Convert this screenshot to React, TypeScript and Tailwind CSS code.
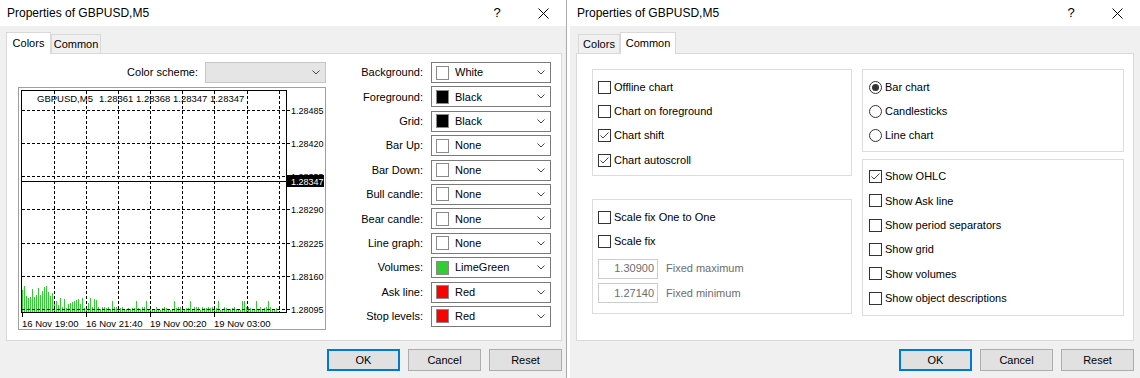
import React from "react";

const colorRows: [string, string, string][] = [
  ["Background:", "#ffffff", "White"],
  ["Foreground:", "#000000", "Black"],
  ["Grid:", "#000000", "Black"],
  ["Bar Up:", "#ffffff", "None"],
  ["Bar Down:", "#ffffff", "None"],
  ["Bull candle:", "#ffffff", "None"],
  ["Bear candle:", "#ffffff", "None"],
  ["Line graph:", "#ffffff", "None"],
  ["Volumes:", "#32cd32", "LimeGreen"],
  ["Ask line:", "#ff0000", "Red"],
  ["Stop levels:", "#ff0000", "Red"],
];

function volumes() {
  let s = 11;
  const rnd = () => {
    s = (s * 9301 + 49297) % 233280;
    return s / 233280;
  };
  const out: number[] = [];
  for (let i = 0; i < 128; i++) {
    const r = rnd();
    let h: number;
    if (i < 16) h = 12 + r * 15;
    else if (i < 38) h = 4 + r * 12;
    else h = 2 + r * 4 + (r > 0.86 ? 5 : 0);
    out.push(Math.round(h));
  }
  return out;
}

function Chevron() {
  return (
    <svg width="8" height="5" viewBox="0 0 8 5" className="block">
      <polyline points="0.5,0.5 4,4 7.5,0.5" fill="none" stroke="#444" strokeWidth="1" />
    </svg>
  );
}

function TitleBar({ title }: { title: string }) {
  return (
    <div className="flex h-[26px] items-center bg-white">
      <span className="pl-[7px] text-[12px] text-black">{title}</span>
      <div className="ml-auto flex h-full">
        <div className="flex w-[46px] items-center justify-center text-[13px]">?</div>
        <div className="flex w-[46px] items-center justify-center">
          <svg width="11" height="11" viewBox="0 0 11 11">
            <path d="M0.5 0.5 L10.5 10.5 M10.5 0.5 L0.5 10.5" stroke="#000" strokeWidth="1" />
          </svg>
        </div>
      </div>
    </div>
  );
}

function Tab({ label, active, w }: { label: string; active?: boolean; w: string }) {
  if (active) {
    return (
      <div
        className={`relative z-10 mb-[-1px] flex h-[22px] items-center justify-center border border-b-0 border-[#d9d9d9] bg-white ${w}`}
      >
        {label}
      </div>
    );
  }
  return (
    <div className={`flex h-[19px] items-center justify-center border border-b-0 border-[#d9d9d9] bg-[#f0f0f0] ${w}`}>
      {label}
    </div>
  );
}

function Buttons() {
  return (
    <div className="mt-[8px] flex justify-end gap-[8px]">
      <div className="flex h-[22px] w-[73px] items-center justify-center border-2 border-[#0078d7] bg-[#e1e1e1]">OK</div>
      <div className="flex h-[22px] w-[73px] items-center justify-center border border-[#adadad] bg-[#e1e1e1]">Cancel</div>
      <div className="flex h-[22px] w-[73px] items-center justify-center border border-[#adadad] bg-[#e1e1e1]">Reset</div>
    </div>
  );
}

function ColorSelect({ label, color, name }: { label: string; color: string; name: string }) {
  return (
    <div className="flex h-[21px] items-center justify-end">
      <span>{label}</span>
      <div className="ml-[8px] flex h-[21px] w-[120px] items-center border border-[#7a7a7a] bg-white pr-[5px]">
        <span className="ml-[4px] h-[14px] w-[13px] border border-[#8a8a8a]" style={{ backgroundColor: color }} />
        <span className="ml-[6px] flex-1">{name}</span>
        <Chevron />
      </div>
    </div>
  );
}

function Chart() {
  const vx = [35, 67, 99, 131, 163, 195, 228, 260];
  const hy = [22, 55, 88, 121, 155, 188, 221];
  const prices = ["1.28485", "1.28420", "1.28355", "1.28290", "1.28225", "1.28160", "1.28095"];
  const times: [string, number][] = [
    ["16 Nov 19:00", 3],
    ["16 Nov 21:40", 67],
    ["19 Nov 00:20", 131],
    ["19 Nov 03:00", 195],
  ];
  const bars = volumes();
  return (
    <svg width="306" height="241" className="block" fontFamily="'Liberation Sans', Arial, sans-serif" fontSize="9.5">
      {bars.map((h, i) => (
        <line key={i} x1={3.5 + i * 2} x2={3.5 + i * 2} y1={224} y2={224 - h} stroke="#32cd32" />
      ))}
      {vx.map((x) => (
        <line key={x} x1={x + 0.5} x2={x + 0.5} y1={3} y2={224} stroke="#000" strokeDasharray="3 2" />
      ))}
      {hy.map((y) => (
        <line key={y} x1={3} x2={268} y1={y + 0.5} y2={y + 0.5} stroke="#000" strokeDasharray="3 2" />
      ))}
      <line x1={3} x2={268} y1={93.5} y2={93.5} stroke="#000" />
      <rect x={2.5} y={2.5} width={265} height={222} fill="none" stroke="#000" />
      {hy.map((y, i) => (
        <g key={y}>
          <line x1={268} x2={271} y1={y + 0.5} y2={y + 0.5} stroke="#000" />
          <text x={272} y={y + 4} fontSize="9">
            {prices[i]}
          </text>
        </g>
      ))}
      <rect x={268} y={87} width={37} height={12} fill="#000" />
      <text x={272} y={97} fill="#fff" fontSize="9">
        1.28347
      </text>
      {times.map(([t, x]) => (
        <g key={t}>
          <line x1={x + 0.5} x2={x + 0.5} y1={224} y2={229} stroke="#000" />
          <text x={x} y={239}>
            {t}
          </text>
        </g>
      ))}
      <text x={18} y={14}>
        GBPUSD,M5
      </text>
      <text x={80} y={14}>
        1.28361 1.28368 1.28347 1.28347
      </text>
    </svg>
  );
}

function ColorsDialog() {
  return (
    <div className="flex h-[378px] w-[567px] flex-col border-r border-[#aaaaaa] bg-[#f0f0f0]">
      <TitleBar title="Properties of GBPUSD,M5" />
      <div className="pl-[6px] pr-[4px] pt-[6px]">
        <div className="flex h-[21px] items-end">
          <Tab label="Colors" active w="w-[45px]" />
          <Tab label="Common" w="w-[50px]" />
        </div>
        <div className="flex h-[288px] border border-[#d9d9d9] bg-white">
          <div className="ml-[11px] w-[308px] pt-[8px]">
            <div className="flex h-[21px] items-center justify-end">
              <span>Color scheme:</span>
              <div className="ml-[7px] flex h-[21px] w-[121px] items-center justify-end border border-[#c6c6c6] bg-[#e5e5e5] pr-[5px]">
                <Chevron />
              </div>
            </div>
            <div className="mt-[4px] h-[243px] w-[308px] border border-[#a0a0a0]">
              <Chart />
            </div>
          </div>
          <div className="flex flex-1 flex-col gap-[3.4px] pr-[10px] pt-[8px]">
            {colorRows.map(([l, c, n]) => (
              <ColorSelect key={l} label={l} color={c} name={n} />
            ))}
          </div>
        </div>
        <Buttons />
      </div>
    </div>
  );
}

function CheckBox({ label, checked }: { label: string; checked?: boolean }) {
  return (
    <div className="flex h-[24.3px] items-center">
      <span className="flex h-[13px] w-[13px] items-center justify-center border border-[#333] bg-white">
        {checked && (
          <svg width="11" height="11" viewBox="0 0 11 11">
            <polyline points="1.5,5.5 4,8 9.5,2.5" fill="none" stroke="#444" strokeWidth="1" />
          </svg>
        )}
      </span>
      <span className="ml-[3px]">{label}</span>
    </div>
  );
}

function Radio({ label, checked }: { label: string; checked?: boolean }) {
  return (
    <div className="flex h-[24.3px] items-center">
      <span className="flex h-[13px] w-[13px] items-center justify-center rounded-full border border-[#333] bg-white">
        {checked && <span className="h-[7px] w-[7px] rounded-full bg-[#333]" />}
      </span>
      <span className="ml-[3px]">{label}</span>
    </div>
  );
}

function FixedInput({ value, label }: { value: string; label: string }) {
  return (
    <div className="flex h-[24.3px] items-center">
      <div className="flex h-[20px] w-[60px] items-center justify-end border border-[#cccccc] bg-white pr-[3px] text-[#6d6d6d]">
        {value}
      </div>
      <span className="ml-[8px] text-[#6d6d6d]">{label}</span>
    </div>
  );
}

function CommonDialog() {
  return (
    <div className="flex h-[378px] w-[570px] flex-col bg-[#f0f0f0]">
      <TitleBar title="Properties of GBPUSD,M5" />
      <div className="pl-[6px] pr-[6px] pt-[6px]">
        <div className="flex h-[21px] items-end">
          <div className="ml-[2px]" />
          <Tab label="Colors" w="w-[42px]" />
          <Tab label="Common" active w="w-[56px]" />
        </div>
        <div className="flex h-[288px] gap-[10px] border border-[#d9d9d9] bg-white pl-[15px] pt-[15px]">
          <div className="flex w-[260px] flex-col">
            <div className="h-[107px] border border-[#dcdcdc] pl-[5px] pt-[5px]">
              <CheckBox label="Offline chart" />
              <CheckBox label="Chart on foreground" />
              <CheckBox label="Chart shift" checked />
              <CheckBox label="Chart autoscroll" checked />
            </div>
            <div className="mt-[23px] h-[115px] border border-[#dcdcdc] pl-[5px] pt-[5px]">
              <CheckBox label="Scale fix One to One" />
              <CheckBox label="Scale fix" />
              <div className="mt-[3px]">
                <FixedInput value="1.30900" label="Fixed maximum" />
                <FixedInput value="1.27140" label="Fixed minimum" />
              </div>
            </div>
          </div>
          <div className="flex w-[262px] flex-col">
            <div className="h-[83px] border border-[#dcdcdc] pl-[6px] pt-[5px]">
              <Radio label="Bar chart" checked />
              <Radio label="Candlesticks" />
              <Radio label="Line chart" />
            </div>
            <div className="mt-[7px] h-[157px] border border-[#dcdcdc] pl-[6px] pt-[4.5px]">
              <CheckBox label="Show OHLC" checked />
              <CheckBox label="Show Ask line" />
              <CheckBox label="Show period separators" />
              <CheckBox label="Show grid" />
              <CheckBox label="Show volumes" />
              <CheckBox label="Show object descriptions" />
            </div>
          </div>
        </div>
        <Buttons />
      </div>
    </div>
  );
}

export default function App() {
  return (
    <div className="flex h-[378px] w-[1140px] bg-white font-['Liberation_Sans',Arial,sans-serif] text-[11px] text-black">
      <ColorsDialog />
      <div className="w-[3px] bg-white" />
      <CommonDialog />
    </div>
  );
}
